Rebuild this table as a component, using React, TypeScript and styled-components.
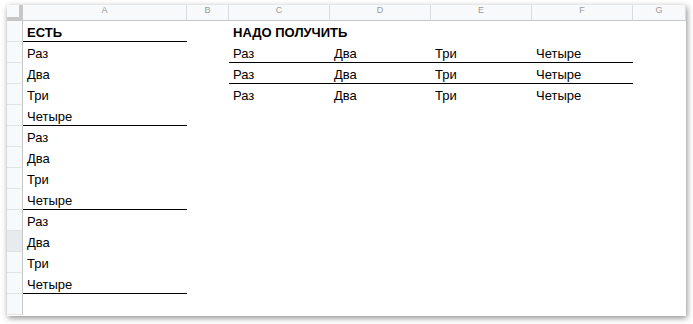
import React from 'react';
import styled, { createGlobalStyle, css } from 'styled-components';

const GlobalStyle = createGlobalStyle`
  html, body {
    margin: 0;
    padding: 0;
    background: #ffffff;
    font-family: Arial, "Liberation Sans", sans-serif;
  }
`;

// --- Sheet window ---
const Page = styled.div`
  width: 693px;
  height: 324px;
  padding: 5px 7px 8px 7px;
  box-sizing: border-box;
`;

const Window = styled.div`
  width: 679px;
  height: 311px;
  background: #ffffff;
  box-shadow: 1px 2px 6px rgba(0, 0, 0, 0.45);
  overflow: hidden;
`;

const Grid = styled.div`
  display: grid;
  grid-template-columns: 16px 164px 42px 101px 101px 101px 101px 53px;
  grid-template-rows: 16px repeat(14, 21px);
`;

// --- Headers ---
const Corner = styled.div`
  background: #f8f9fa;
  border-right: 4px solid #c7c7c7;
  border-bottom: 4px solid #c7c7c7;
  box-sizing: border-box;
`;

const ColHeader = styled.div`
  background: #f8f9fa;
  border-right: 1px solid #dadce0;
  border-bottom: 1px solid #c4c7c5;
  box-sizing: border-box;
  color: #9a9a9a;
  font-size: 9px;
  line-height: 11px;
  text-align: center;
`;

const RowHeader = styled.div<{ $active?: boolean }>`
  background: ${(p) => (p.$active ? '#e8eaed' : '#f8f9fa')};
  border-right: 1px solid #c4c7c5;
  border-bottom: 1px solid #e2e3e3;
  box-sizing: border-box;
`;

// --- Cells (gridlines hidden, only drawn borders show) ---
const Cell = styled.div<{ $bold?: boolean; $ruled?: boolean; $span?: number }>`
  display: flex;
  align-items: flex-end;
  padding: 0 4px 1px;
  box-sizing: border-box;
  border-bottom: 1px solid transparent;
  font-size: 13px;
  color: #000;
  white-space: nowrap;
  overflow: visible;
  ${(p) => p.$span && css`grid-column: span ${p.$span};`}
  ${(p) => p.$bold && css`font-weight: bold;`}
  ${(p) =>
    p.$ruled &&
    css`
      border-bottom-color: #000;
    `}
`;

const columns = ['A', 'B', 'C', 'D', 'E', 'F', 'G'];
const words = ['Раз', 'Два', 'Три', 'Четыре'];

type CellData = { text?: string; bold?: boolean; ruled?: boolean; span?: number };

function buildRow(r: number): CellData[] {
  const row: CellData[] = [];
  // column A: the source list
  if (r === 0) row.push({ text: 'ЕСТЬ', bold: true, ruled: true });
  else if (r <= 12) {
    const i = (r - 1) % 4;
    row.push({ text: words[i], ruled: i === 3 });
  } else row.push({});
  // column B
  row.push({});
  // columns C..F: the target table
  if (r === 0) {
    row.push({ text: 'НАДО ПОЛУЧИТЬ', bold: true, span: 2 });
    row.push({}, {});
  } else if (r <= 3) {
    words.forEach((w) => row.push({ text: w, ruled: r < 3 }));
  } else {
    row.push({}, {}, {}, {});
  }
  // column G
  row.push({});
  return row;
}

export default function App() {
  const rows = Array.from({ length: 14 }, (_, r) => buildRow(r));
  return (
    <>
      <GlobalStyle />
      <Page>
        <Window>
          <Grid>
            <Corner />
            {columns.map((c) => (
              <ColHeader key={c}>{c}</ColHeader>
            ))}
            {rows.map((row, r) => (
              <React.Fragment key={r}>
                <RowHeader $active={r === 10} />
                {row.map((cell, ci) => (
                  <Cell key={ci} $bold={cell.bold} $ruled={cell.ruled} $span={cell.span}>
                    {cell.text}
                  </Cell>
                ))}
              </React.Fragment>
            ))}
          </Grid>
        </Window>
      </Page>
    </>
  );
}
